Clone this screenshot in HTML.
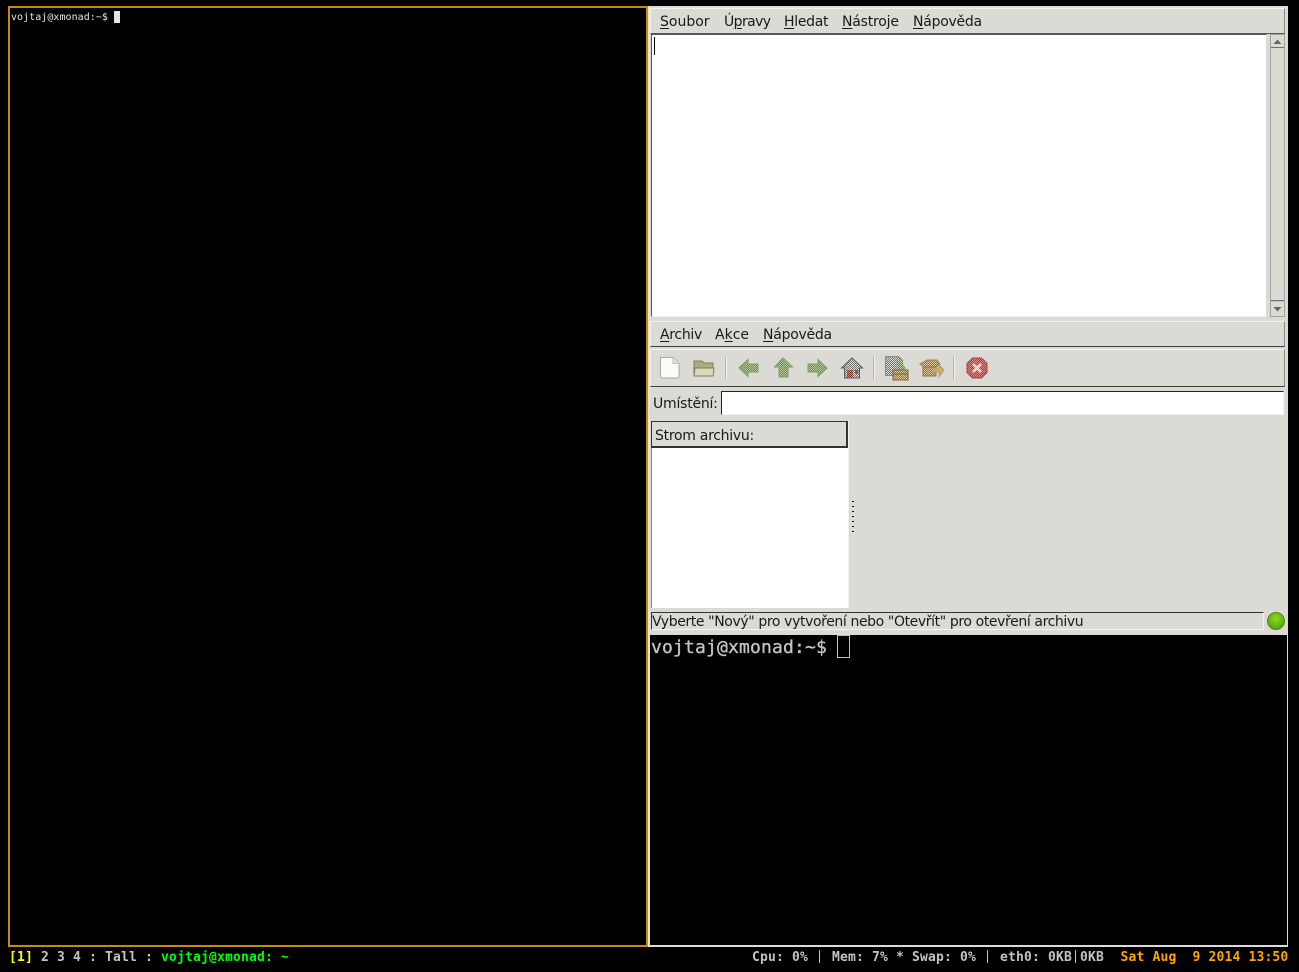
<!DOCTYPE html>
<html><head><meta charset="utf-8"><style>
html,body{margin:0;padding:0;background:#000;width:1299px;height:972px;overflow:hidden}
div,span.a{position:absolute;box-sizing:border-box}
.t{position:absolute;white-space:pre;font-family:"DejaVu Sans",sans-serif;font-size:14px;color:#1a1a1a;line-height:16px}
.m{position:absolute;white-space:pre;font-family:"DejaVu Sans Mono",monospace;}
.b{position:absolute;white-space:pre;font-family:"DejaVu Sans Mono",monospace;font-weight:bold;font-size:13px;letter-spacing:.17px;line-height:16px;color:#c0c4c8;top:950px}
u{text-decoration:underline;text-underline-offset:2px;text-decoration-thickness:1px}
.sep{position:absolute;top:357px;width:2px;height:22px;background:linear-gradient(90deg,#b5b3ad 50%,#f4f3f0 50%)}
svg{position:absolute}
</style></head><body>
<svg width="0" height="0" style="left:0;top:0"><defs>
<pattern id="g" width="2" height="2" patternUnits="userSpaceOnUse"><rect width="2" height="2" fill="#b9cfa0"/><rect width="1" height="1" fill="#5f8a45"/><rect x="1" y="1" width="1" height="1" fill="#5f8a45"/></pattern>
<pattern id="k" width="2" height="2" patternUnits="userSpaceOnUse"><rect width="2" height="2" fill="#e2e1dd"/><rect width="1" height="1" fill="#6d6c68"/><rect x="1" y="1" width="1" height="1" fill="#6d6c68"/></pattern>
<pattern id="n" width="2" height="2" patternUnits="userSpaceOnUse"><rect width="2" height="2" fill="#e6cf9e"/><rect width="1" height="1" fill="#8a6b38"/><rect x="1" y="1" width="1" height="1" fill="#8a6b38"/></pattern>
<pattern id="r" width="2" height="2" patternUnits="userSpaceOnUse"><rect width="2" height="2" fill="#dc8a86"/><rect width="1" height="1" fill="#b23a3a"/><rect x="1" y="1" width="1" height="1" fill="#b23a3a"/></pattern>
<pattern id="h" width="2" height="2" patternUnits="userSpaceOnUse"><rect width="2" height="2" fill="#c98a78"/><rect width="1" height="1" fill="#7d3424"/><rect x="1" y="1" width="1" height="1" fill="#7d3424"/></pattern>
</defs></svg>
<!-- left terminal -->
<div style="left:8px;top:6px;width:640px;height:941px;border:2px solid #c88a0e;background:#000"></div>
<span class="m" style="left:11px;top:11px;font-size:10px;line-height:14px;color:#e8e8e8;letter-spacing:.04px">vojtaj@xmonad:~$</span>
<div style="left:114px;top:11px;width:6px;height:12px;background:#e4e4e4"></div>

<!-- right window frame -->
<div style="left:648px;top:6px;width:640px;height:941px;background:#dcdad5"></div>
<div style="left:648px;top:6px;width:2px;height:941px;background:#e6e4e0"></div>
<!-- editor menu -->
<div style="left:650px;top:8px;width:635px;height:26px;background:#dcdad5;border:1px solid;border-color:#f2f1ee #8c8a85 #5a5955 #f2f1ee"></div>
<span class="t" style="left:660px;top:14px"><u>S</u>oubor</span>
<span class="t" style="left:724px;top:14px;letter-spacing:-.6px">Ú<u>p</u>ravy</span>
<span class="t" style="left:784px;top:14px;letter-spacing:-.3px"><u>H</u>ledat</span>
<span class="t" style="left:842px;top:14px;letter-spacing:-.2px"><u>N</u>ástroje</span>
<span class="t" style="left:913px;top:14px;letter-spacing:-.25px"><u>N</u>ápověda</span>
<!-- editor text -->
<div style="left:651px;top:34px;width:616px;height:283px;background:#fff;border-left:1px solid #555;border-top:1px solid #555;border-right:1px solid #dcdad5;border-bottom:1px solid #f4f3f0"></div>
<div style="left:654px;top:37px;width:1px;height:18px;background:#000"></div>
<!-- scrollbar -->
<div style="left:1270px;top:34px;width:15px;height:283px;background:#c4c2bd;border:1px solid #a5a39e"></div>
<div style="left:1271px;top:35px;width:13px;height:13px;background:#dcdad5;border-bottom:1px solid #6f6e6a"></div>
<div style="left:1271px;top:48px;width:13px;height:253px;background:#dcdad5;border-bottom:1px solid #6f6e6a"></div>
<div style="left:1271px;top:302px;width:13px;height:14px;background:#dcdad5"></div>
<svg style="left:1271px;top:35px" width="13" height="13"><path d="M2.500 9h8L6.500 4.500z" fill="#666"/></svg>
<svg style="left:1271px;top:302px" width="13" height="14"><path d="M2.500 5h8L6.500 9.500z" fill="#666"/></svg>

<!-- archive menu -->
<div style="left:650px;top:321px;width:635px;height:26px;background:#dcdad5;border:1px solid;border-color:#f2f1ee #8c8a85 #3f3e3b #f2f1ee"></div>
<span class="t" style="left:660px;top:327px;letter-spacing:-.3px"><u>A</u>rchiv</span>
<span class="t" style="left:715px;top:327px"><span>A</span><u>k</u>ce</span>
<span class="t" style="left:763px;top:327px;letter-spacing:-.25px"><u>N</u>ápověda</span>
<!-- toolbar -->
<div style="left:650px;top:349px;width:635px;height:38px;background:#dcdad5;border:1px solid;border-color:#f2f1ee #8c8a85 #3f3e3b #f2f1ee"></div>
<svg style="left:658px;top:356px" width="24" height="24"><path d="M2.500 1.500H15l6 6V20a2 2 0 0 1-2 2H4.500a2 2 0 0 1-2-2z" fill="#fbfbfa" stroke="#a8a6a0"/><path d="M15 1.500V7.500H21" fill="#e4e3df" stroke="#c4c2bc"/></svg>
<svg style="left:692px;top:358px" width="24" height="20"><path d="M2 18V3h8l2 2h9v13z" fill="#a9ad80" stroke="#7d7f60"/><path d="M2 18l1-8h19l-1 8z" fill="#d8dabb" stroke="#7d7f60"/></svg>
<div class="sep" style="left:725px"></div>
<svg style="left:738px;top:357px" width="22" height="22"><path d="M1 11 10 2.500v4.500h10v8H10v4.500z" fill="url(#g)" stroke="#7d9c68"/></svg>
<svg style="left:772px;top:357px" width="22" height="22"><path d="M11 1 20.500 10H16v10H7V10H2.500z" fill="url(#g)" stroke="#7d9c68"/></svg>
<svg style="left:806px;top:357px" width="22" height="22"><path d="M21 11 12 2.500v4.500H2v8h10v4.500z" fill="url(#g)" stroke="#7d9c68"/></svg>
<svg style="left:840px;top:356px" width="24" height="24"><path d="M1.500 12 12 2l10.500 10h-3v10h-15V12z" fill="url(#k)" stroke="#5c5b57"/><path d="M7 14h6v8H7z" fill="url(#h)"/><path d="M15 14h3v4h-3z" fill="#666"/></svg>
<div class="sep" style="left:873px"></div>
<svg style="left:884px;top:355px" width="26" height="26"><path d="M1.500 1.500h13l4 4v15h-17z" fill="url(#k)" stroke="#8a8985"/><path d="M12 5l6 2 4 7-7 1z" fill="url(#g)"/><path d="M9 15h15v10H9z" fill="url(#n)" stroke="#7d6540"/><path d="M9 19h15" stroke="#7d6540"/></svg>
<svg style="left:918px;top:357px" width="27" height="24"><path d="M2 7l7-4h10l3 4-4 3H6z" fill="url(#n)" stroke="#9b8152"/><path d="M5 10h13v9H5z" fill="url(#n)" stroke="#8f7445"/><path d="M15 11h6V8l5 5-5 7v-5h-6z" fill="#dfa84e" stroke="#a0a09a"/></svg>
<div class="sep" style="left:953px"></div>
<svg style="left:965px;top:356px" width="24" height="24"><path d="M7.500 2h9L22 7.500v9L16.500 22h-9L2 16.500v-9z" fill="url(#r)" stroke="#a34445"/><path d="M8 8l8 8M16 8l-8 8" stroke="#ecd9d6" stroke-width="2.500"/></svg>

<!-- location -->
<span class="t" style="left:653px;top:396px;letter-spacing:-.22px">Umístění:</span>
<div style="left:721px;top:391px;width:563px;height:24px;background:#fff;border:1px solid;border-color:#222 #f4f3f0 #f4f3f0 #222"></div>

<!-- tree -->
<div style="left:651px;top:421px;width:197px;height:27px;background:#dcdad5;border:1px solid #333;border-right-width:2px;border-bottom-width:2px"></div>
<span class="t" style="left:655px;top:428px;letter-spacing:-.28px">Strom archivu:</span>
<div style="left:651px;top:448px;width:197px;height:160px;background:#fff;border-left:1px solid #8c8a85"></div>
<div style="left:848px;top:421px;width:1px;height:188px;background:#f4f3f0"></div>
<svg style="left:851px;top:499px" width="4" height="34"><path d="M1 2h2v1H1zM1 7h2v1H1zM1 12h2v1H1zM1 17h2v1H1zM1 22h2v1H1zM1 27h2v1H1zM1 32h2v1H1z" fill="#111"/></svg>

<!-- statusbar -->
<div style="left:651px;top:612px;width:613px;height:18px;border:1px solid;border-color:#333 #f4f3f0 #f4f3f0 #333"></div>
<span class="t" style="left:652px;top:614px;letter-spacing:-.39px">Vyberte "Nový" pro vytvoření nebo "Otevřít" pro otevření archivu</span>
<div style="left:1267px;top:612px;width:18px;height:18px;border-radius:50%;background:radial-gradient(circle at 50% 35%,#8fdc1e,#5aa70c 75%);border:1px solid #4f8a10"></div>

<!-- bottom terminal -->
<div style="left:650px;top:635px;width:637px;height:310px;background:#000"></div>
<span class="m" style="left:651px;top:637px;font-size:18px;line-height:22px;letter-spacing:.16px;color:#c4c4c4;-webkit-text-stroke:.35px #c4c4c4">vojtaj@xmonad:~$</span>
<div style="left:837px;top:635px;width:13px;height:23px;border:1px solid #c0c0c0"></div>

<!-- status bar -->
<span class="b" style="left:9px;color:#ffff00">[1]</span>
<span class="b" style="left:41px">2 3 4 : Tall :</span>
<span class="b" style="left:161px;color:#00ff00">vojtaj@xmonad: ~</span>
<span class="b" style="left:752px">Cpu: 0%</span>
<div style="left:819px;top:950px;width:1px;height:13px;background:#c0c4c8"></div>
<span class="b" style="left:832px">Mem: 7% * Swap: 0%</span>
<div style="left:987px;top:950px;width:1px;height:13px;background:#c0c4c8"></div>
<span class="b" style="left:1000px">eth0: 0KB</span>
<div style="left:1075px;top:950px;width:1px;height:13px;background:#c0c4c8"></div>
<span class="b" style="left:1080px">0KB</span>
<span class="b" style="left:1120.500px;color:#ffa500">Sat Aug  9 2014 13:50</span>
</body></html>
